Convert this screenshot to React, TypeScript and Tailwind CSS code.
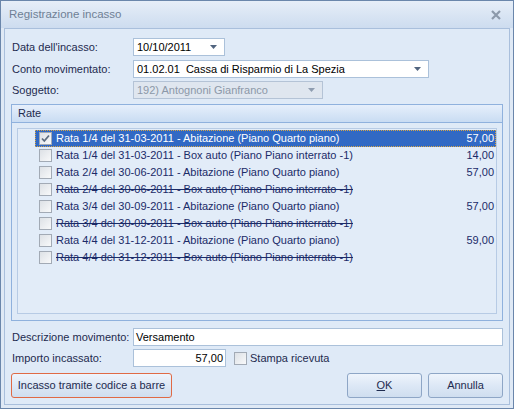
import React from 'react';

type Rata = { text: string; amount?: string; struck?: boolean; selected?: boolean; checked?: boolean };

const RATE: Rata[] = [
  { text: 'Rata 1/4 del 31-03-2011 - Abitazione (Piano Quarto piano)', amount: '57,00', selected: true, checked: true },
  { text: 'Rata 1/4 del 31-03-2011 - Box auto (Piano Piano interrato -1)', amount: '14,00' },
  { text: 'Rata 2/4 del 30-06-2011 - Abitazione (Piano Quarto piano)', amount: '57,00' },
  { text: 'Rata 2/4 del 30-06-2011 - Box auto (Piano Piano interrato -1)', struck: true },
  { text: 'Rata 3/4 del 30-09-2011 - Abitazione (Piano Quarto piano)', amount: '57,00' },
  { text: 'Rata 3/4 del 30-09-2011 - Box auto (Piano Piano interrato -1)', struck: true },
  { text: 'Rata 4/4 del 31-12-2011 - Abitazione (Piano Quarto piano)', amount: '59,00' },
  { text: 'Rata 4/4 del 31-12-2011 - Box auto (Piano Piano interrato -1)', struck: true },
];

function Arrow({ muted }: { muted?: boolean }) {
  return (
    <svg width="7" height="4" viewBox="0 0 7 4" className="shrink-0">
      <path d="M0 0h7L3.5 4z" fill={muted ? '#8f9db0' : '#51647f'} />
    </svg>
  );
}

function Check({ checked }: { checked?: boolean }) {
  return (
    <span className="w-[13px] h-[13px] border border-[#a2aab5] bg-gradient-to-br from-[#dde1e6] to-[#f8f9fa] flex items-center justify-center shrink-0">
      {checked && (
        <svg width="9" height="9" viewBox="0 0 9 9">
          <path d="M1 4.5l2.3 2.5L8 1.5" stroke="#5e6d80" strokeWidth="1.8" fill="none" />
        </svg>
      )}
    </span>
  );
}

function Combo({ value, width, disabled }: { value: string; width: string; disabled?: boolean }) {
  return (
    <div
      className={`${width} h-[18px] border flex items-center pl-[3px] pr-[7px] ${
        disabled ? 'border-[#b4c3d6] bg-[#dfe6ef] text-[#8c98a8]' : 'border-[#abc1da] bg-white text-black'
      }`}
    >
      <span className="flex-1 truncate whitespace-pre">{value}</span>
      <Arrow muted={disabled} />
    </div>
  );
}

function Button({ children, width, hot }: { children: React.ReactNode; width: string; hot?: boolean }) {
  return (
    <div
      className={`${width} h-[25px] rounded-[3px] border flex items-center justify-center whitespace-nowrap bg-gradient-to-b from-[#eef4fc] via-[#dde8f6] to-[#cfdeef] text-[#1e2b4f] ${
        hot ? 'border-[#e06a45]' : 'border-[#8ea6c6]'
      }`}
    >
      {children}
    </div>
  );
}

export default function App() {
  return (
    <div
      className="w-[514px] h-[409px] border border-[#6a86ab] bg-[#dfe9f5] flex flex-col text-[11px] leading-none text-[#1e2b4f]"
      style={{ fontFamily: '"Liberation Sans", Arial, sans-serif' }}
    >
      <div className="h-[27px] bg-gradient-to-b from-[#e6eef8] to-[#cddcef] flex items-center pl-[8px] pr-[12px]">
        <span className="flex-1 text-[11.5px] text-[#6f7f95]">Registrazione incasso</span>
        <svg width="10" height="10" viewBox="0 0 10 10">
          <path d="M1 1l8 8M9 1l-8 8" stroke="#8c99aa" strokeWidth="2.2" />
        </svg>
      </div>

      <div className="flex-1 mx-[3px] mb-[3px] border border-[#a9bfdc] bg-[#dfeaf7] px-[6px] pt-[9px] pb-[6px] flex flex-col">
        <div className="flex items-center h-[18px]">
          <span className="w-[122px] pl-[1px] whitespace-nowrap">Data dell'incasso:</span>
          <Combo value="10/10/2011" width="w-[92px]" />
        </div>
        <div className="flex items-center h-[18px] mt-[4px]">
          <span className="w-[122px] pl-[1px] whitespace-nowrap">Conto movimentato:</span>
          <Combo value="01.02.01  Cassa di Risparmio di La Spezia" width="w-[296px]" />
        </div>
        <div className="flex items-center h-[18px] mt-[3px]">
          <span className="w-[122px] pl-[1px] whitespace-nowrap">Soggetto:</span>
          <Combo value="192) Antognoni Gianfranco" width="w-[190px]" disabled />
        </div>

        <div className="h-[217px] mt-[5px] border border-[#8fb1dd] flex flex-col">
          <div className="h-[18px] bg-gradient-to-b from-[#e6effb] to-[#c9dcf3] border-b border-[#8fb1dd] flex items-center pl-[6px] text-[#1e2b4f]">
            Rate
          </div>
          <div className="flex-1 mx-[5px] mt-[5px] mb-[6px] border border-[#b7cbe5] bg-[#e2ecf8] pt-[1px] pl-[17px] text-[#1b2b68]">
            {RATE.map((r, i) => (
              <div
                key={i}
                className={`h-[17px] flex items-center gap-[4px] pl-[4px] pr-[2px] ${
                  r.selected ? 'bg-[#3169c4] text-white outline-1 outline-dotted outline-[#d9a645] -outline-offset-1' : ''
                }`}
              >
                <Check checked={r.checked} />
                <span className={`flex-1 whitespace-nowrap ${r.struck ? 'line-through' : ''}`}>{r.text}</span>
                <span>{r.amount}</span>
              </div>
            ))}
          </div>
        </div>

        <div className="flex items-center h-[18px] mt-[7px]">
          <span className="w-[122px] pl-[1px] whitespace-nowrap">Descrizione movimento:</span>
          <div className="flex-1 h-[18px] border border-[#abc1da] bg-white text-black flex items-center pl-[2px]">Versamento</div>
        </div>
        <div className="flex items-center h-[18px] mt-[3px]">
          <span className="w-[122px] pl-[1px] whitespace-nowrap">Importo incassato:</span>
          <div className="w-[93px] h-[18px] border border-[#abc1da] bg-white text-black flex items-center justify-end pr-[2px]">57,00</div>
          <span className="ml-[8px] mr-[3px]">
            <Check />
          </span>
          <span>Stampa ricevuta</span>
        </div>

        <div className="flex items-center mt-[6px]">
          <Button width="w-[161px]" hot>
            Incasso tramite codice a barre
          </Button>
          <div className="flex-1" />
          <Button width="w-[75px]">
            <span className="underline">O</span>K
          </Button>
          <div className="w-[6px]" />
          <Button width="w-[75px]">Annulla</Button>
        </div>
      </div>
    </div>
  );
}
